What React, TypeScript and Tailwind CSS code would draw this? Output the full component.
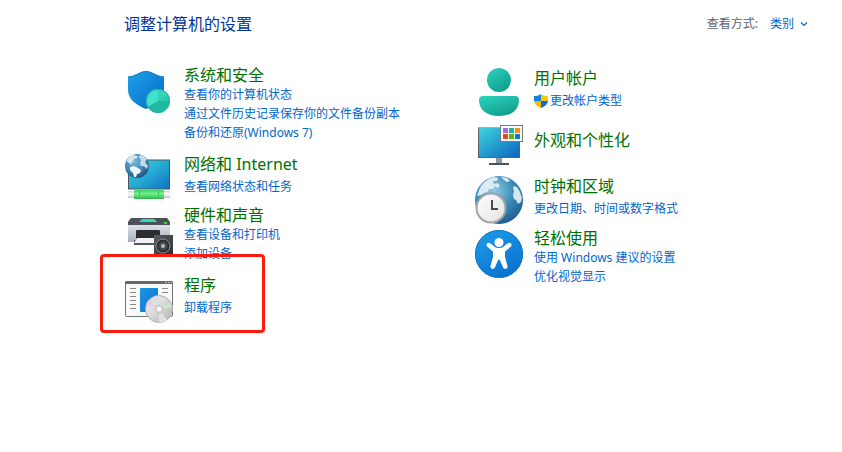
import React from 'react';
import clsx from 'clsx';

interface Task {
  label: string;
  shield?: boolean;
}

interface Category {
  title: string;
  icon: React.ReactNode;
  tasks: Task[];
  highlighted?: boolean;
}

const iconClass = 'block w-12 h-12 shrink-0 overflow-visible';

const SecurityIcon = () => (
  <svg className={iconClass} viewBox="0 0 48 48" aria-hidden="true">
    <defs>
      <linearGradient id="sec-shield" x1="0" y1="0" x2="1" y2="1">
        <stop offset="0" stopColor="#1fa2e8" />
        <stop offset="1" stopColor="#0568c6" />
      </linearGradient>
    </defs>
    <path d="M4 8.500C11 8.500 16 3 22 3s11 5.500 18 5.500V22c0 9-8 15-18 19C12 37 4 31 4 22Z" fill="url(#sec-shield)" />
    <path d="M4.500 9C11.500 9 16 3.500 22 3.500S32.500 9 39.500 9" fill="none" stroke="#1580c4" />
    <circle cx="34" cy="33" r="12" fill="#22b8a0" />
    <path d="M34 33V21a12 12 0 0 0-10.400 18Z" fill="#41e2cb" />
    <path d="M34 33V21a12 12 0 0 1 10.400 6Z" fill="#35d3bb" />
    <path d="M34 33l10.400-6a12 12 0 0 1 1.600 6Z" fill="#2ec9b1" />
    <circle cx="34" cy="33" r="11.500" fill="none" stroke="#27b39d" />
  </svg>
);

const NetworkIcon = () => (
  <svg className={iconClass} viewBox="0 0 48 48" aria-hidden="true">
    <defs>
      <linearGradient id="net-screen" x1="0" y1="0" x2="1" y2="1">
        <stop offset="0" stopColor="#45d6e6" />
        <stop offset="0.5" stopColor="#25aad4" />
        <stop offset="1" stopColor="#1270c4" />
      </linearGradient>
      <radialGradient id="net-globe" cx="0.4" cy="0.3" r="0.7">
        <stop offset="0" stopColor="#79b6d8" />
        <stop offset="0.6" stopColor="#4389b4" />
        <stop offset="1" stopColor="#22547f" />
      </radialGradient>
      <linearGradient id="net-cable" x1="0" y1="0" x2="0" y2="1">
        <stop offset="0" stopColor="#3fce5f" />
        <stop offset="0.4" stopColor="#75f08e" />
        <stop offset="1" stopColor="#2fb44e" />
      </linearGradient>
      <linearGradient id="net-plug" x1="0" y1="0" x2="0" y2="1">
        <stop offset="0" stopColor="#d4d4d4" />
        <stop offset="0.4" stopColor="#ffffff" />
        <stop offset="1" stopColor="#c4c4c4" />
      </linearGradient>
    </defs>
    <rect x="4.500" y="8" width="41" height="29" fill="url(#net-screen)" stroke="#4c5660" />
    <rect x="4" y="39" width="42" height="7" fill="url(#net-plug)" />
    <rect x="10" y="38" width="30" height="9" rx="1" fill="url(#net-cable)" />
    <path d="M15.500 38v9M34.500 38v9" stroke="#3dc45c" />
    <circle cx="13" cy="14" r="12" fill="url(#net-globe)" />
    <path d="M2.500 9C4 5.500 7 3 10 2.500l2 1.500 2 0-1 2-3 1-1 3-2 1 1 2-2-1-2-2Z" fill="#d3e5ef" />
    <path d="M6 15l4-1 4 2 3 2-1 3-3 1-1 3-2 0-1-4-3-3Z" fill="#edf4f7" />
    <path d="M15 4l3-1 3 2 2 3-2 1 1 3 2 1-1 4-3-3-3 0-1-3 1-3-2-2Z" fill="#c3dbe8" />
  </svg>
);

const HardwareIcon = () => (
  <svg className={iconClass} viewBox="0 0 48 48" aria-hidden="true">
    <defs>
      <linearGradient id="hw-glow" x1="0" y1="0" x2="1" y2="0">
        <stop offset="0" stopColor="#28c8f0" />
        <stop offset="1" stopColor="#3de884" />
      </linearGradient>
      <linearGradient id="hw-body" x1="0" y1="0" x2="0" y2="1">
        <stop offset="0" stopColor="#dce0e6" />
        <stop offset="1" stopColor="#a9b0ba" />
      </linearGradient>
      <linearGradient id="hw-speaker" x1="0" y1="0" x2="1" y2="1">
        <stop offset="0" stopColor="#5a5d61" />
        <stop offset="1" stopColor="#2b2d31" />
      </linearGradient>
    </defs>
    <path d="M7 10h36l3 4v3H4v-3Z" fill="#4b5159" />
    <path d="M18 11h12l3 3H15Z" fill="url(#hw-glow)" />
    <rect x="40" y="14" width="3" height="2" fill="#39d638" />
    <rect x="4" y="17" width="42" height="17" fill="url(#hw-body)" />
    <rect x="10" y="32" width="30" height="5" fill="#50565f" />
    <rect x="12" y="22" width="24" height="9" rx="1" fill="#2a2d33" />
    <path d="M13 30h22l1 5H10Z" fill="#f2f2f2" />
    <rect x="30" y="27" width="19" height="21" fill="url(#hw-speaker)" />
    <circle cx="39" cy="38" r="7" fill="#2b2d30" stroke="#8b8e92" />
    <circle cx="39" cy="38" r="4.500" fill="#45484c" />
    <circle cx="39" cy="38" r="2" fill="#b7babd" />
  </svg>
);

const ProgramsIcon = () => (
  <svg className={iconClass} viewBox="0 0 48 48" aria-hidden="true">
    <defs>
      <linearGradient id="prog-pane" x1="0" y1="0" x2="1" y2="1">
        <stop offset="0" stopColor="#1e97e4" />
        <stop offset="1" stopColor="#0a70cf" />
      </linearGradient>
      <linearGradient id="prog-disc" x1="0" y1="0" x2="1" y2="1">
        <stop offset="0" stopColor="#c4c4c4" />
        <stop offset="0.3" stopColor="#e6e6e6" />
        <stop offset="0.6" stopColor="#cfcfcf" />
        <stop offset="1" stopColor="#b4b4b4" />
      </linearGradient>
    </defs>
    <rect x="1.500" y="8.500" width="47" height="35" rx="1" fill="#f8f8f8" stroke="#737373" />
    <path d="M1 11V9l1-1h46l1 1v2Z" fill="#686868" />
    <path d="M41 9.500h1.500M44 9.500h1.500M47 9.500h1" stroke="#d8d8d8" />
    <path d="M6 15.500h6M6 19.500h6M6 23.500h6M6 27.500h6M6 31.500h6M6 35.500h6M38 15.500h6M38 19.500h6" stroke="#8a8a8a" />
    <rect x="16" y="15" width="18" height="24" rx="1" fill="url(#prog-pane)" />
    <circle cx="35" cy="36" r="13.500" fill="url(#prog-disc)" stroke="#b0b0b0" />
    <path d="M35 36 22 32a13.500 13.500 0 0 1 3-5.500Z" fill="#e6d0e5" />
    <path d="M35 36l12-6a13.500 13.500 0 0 1 1.500 4Z" fill="#c9eacc" />
    <path d="M35 36 28 24.500a13.500 13.500 0 0 1 7-2Z" fill="#dedede" />
    <path d="M35 36l8 11a13.500 13.500 0 0 1-8 2.500Z" fill="#e0e0e0" />
    <circle cx="35" cy="36" r="4" fill="#d9d9d9" stroke="#c4c4c4" />
    <circle cx="35" cy="36" r="2" fill="#ffffff" />
  </svg>
);

const UserIcon = () => (
  <svg className={iconClass} viewBox="-1 0 48 48" aria-hidden="true">
    <defs>
      <linearGradient id="user-fill" x1="0.2" y1="0" x2="0.8" y2="1">
        <stop offset="0" stopColor="#2ad0bb" />
        <stop offset="1" stopColor="#109a89" />
      </linearGradient>
    </defs>
    <circle cx="24" cy="14" r="12" fill="url(#user-fill)" />
    <path d="M8 30h32a4 4 0 0 1 4 4c0 10-8 16-20 16S4 44 4 34a4 4 0 0 1 4-4Z" fill="url(#user-fill)" />
  </svg>
);

const AppearanceIcon = () => (
  <svg className={iconClass} viewBox="-1 0 48 48" aria-hidden="true">
    <defs>
      <linearGradient id="app-screen" x1="0" y1="0" x2="1" y2="1">
        <stop offset="0" stopColor="#3dd6e2" />
        <stop offset="1" stopColor="#0c63bd" />
      </linearGradient>
    </defs>
    <rect x="21" y="38" width="6" height="5" fill="#8e979f" />
    <rect x="14" y="43" width="20" height="2" fill="#4a5159" />
    <rect x="3.500" y="7.500" width="41" height="30" fill="url(#app-screen)" stroke="#59636d" />
    <path d="M3 7.500h42" stroke="#9fb0bb" />
    <rect x="25.500" y="5.500" width="22" height="16" fill="#fbfbfb" stroke="#77797c" />
    <rect x="28" y="8" width="5" height="5" fill="#9a6fd8" />
    <rect x="34" y="8" width="5" height="5" fill="#19b5a2" />
    <rect x="40" y="8" width="5" height="5" fill="#f7900f" />
    <rect x="28" y="14" width="5" height="5" fill="#e0500f" />
    <rect x="34" y="14" width="5" height="5" fill="#5fb410" />
    <rect x="40" y="14" width="5" height="5" fill="#0a78d7" />
  </svg>
);

const ClockIcon = () => (
  <svg className={iconClass} viewBox="-1 0 48 48" aria-hidden="true">
    <defs>
      <radialGradient id="clk-globe" cx="0.4" cy="0.3" r="0.75">
        <stop offset="0" stopColor="#8fcbe4" />
        <stop offset="0.5" stopColor="#3f90bb" />
        <stop offset="1" stopColor="#1b5a8c" />
      </radialGradient>
      <linearGradient id="clk-face" x1="0" y1="0" x2="1" y2="1">
        <stop offset="0" stopColor="#ffffff" />
        <stop offset="1" stopColor="#e2e2e2" />
      </linearGradient>
    </defs>
    <circle cx="24" cy="26" r="24" fill="url(#clk-globe)" />
    <path d="M5 14C8 8 14 4 19 3l4 1-1 3-4 0 1 3 4-1 2 3-3 2-2-2-2 3-4 0-1 3-4 1-3 2-4 1Z" fill="#d9ebf3" />
    <path d="M26 3l6 1 3 3-3 1-3-2Z" fill="#d9ebf3" />
    <path d="M39 12l3 1 3 5 2 6-1 4-3 2-2-4-2-1-1-4 1-4-1-3Z" fill="#d2e6ef" />
    <circle cx="16" cy="34" r="14.500" fill="url(#clk-face)" stroke="#a3a3a3" strokeWidth="2" />
    <path d="M17 26v9h6" fill="none" stroke="#4b4b4b" strokeWidth="2" />
  </svg>
);

const AccessIcon = () => (
  <svg className={iconClass} viewBox="-1 0 48 48" aria-hidden="true">
    <defs>
      <linearGradient id="acc-fill" x1="0.2" y1="0" x2="0.8" y2="1">
        <stop offset="0" stopColor="#1c9be6" />
        <stop offset="1" stopColor="#0a6fce" />
      </linearGradient>
    </defs>
    <circle cx="24" cy="23" r="24" fill="url(#acc-fill)" />
    <circle cx="24" cy="23" r="23.500" fill="none" stroke="#1479c4" />
    <circle cx="24" cy="11.500" r="4.500" fill="#ffffff" />
    <path
      d="M12 12.500c1-1.200 2.500-1 3.500 0l4.500 3.500c2 1.300 6 1.300 8 0l4.500-3.500c1-1 2.500-1.200 3.500 0s.7 2.500-.3 3.300L30 20.500V26l2.500 9c.3 1.400-.3 2.500-1.500 2.800s-2.500-.3-3-1.600L24.800 29c-.3-.8-1.300-.8-1.600 0L20 36.200c-.5 1.300-1.800 1.900-3 1.600s-1.800-1.400-1.500-2.800L18 26v-5.500l-5.700-4.700c-1-.8-1.300-2.100-.3-3.300Z"
      fill="#ffffff"
    />
  </svg>
);

const ShieldBadge = () => (
  <svg className="block w-3.5 h-3.5 shrink-0" viewBox="0 0 14 14" aria-hidden="true">
    <path d="M7 0C5 1.500 3 2 0 2v5h7Z" fill="#1683d8" />
    <path d="M7 0c2 1.500 4 2 7 2v5H7Z" fill="#fdc60b" />
    <path d="M0 7h7v7C3 12.500 .5 10.500 0 7Z" fill="#f9b90a" />
    <path d="M14 7H7v7c4-1.500 6.500-3.500 7-7Z" fill="#0f6fc6" />
  </svg>
);

const leftColumn: Category[] = [
  {
    title: '系统和安全',
    icon: <SecurityIcon />,
    tasks: [
      { label: '查看你的计算机状态' },
      { label: '通过文件历史记录保存你的文件备份副本' },
      { label: '备份和还原(Windows 7)' },
    ],
  },
  { title: '网络和 Internet', icon: <NetworkIcon />, tasks: [{ label: '查看网络状态和任务' }] },
  {
    title: '硬件和声音',
    icon: <HardwareIcon />,
    tasks: [{ label: '查看设备和打印机' }, { label: '添加设备' }],
  },
  { title: '程序', icon: <ProgramsIcon />, tasks: [{ label: '卸载程序' }], highlighted: true },
];

const rightColumn: Category[] = [
  { title: '用户帐户', icon: <UserIcon />, tasks: [{ label: '更改帐户类型', shield: true }] },
  { title: '外观和个性化', icon: <AppearanceIcon />, tasks: [] },
  { title: '时钟和区域', icon: <ClockIcon />, tasks: [{ label: '更改日期、时间或数字格式' }] },
  {
    title: '轻松使用',
    icon: <AccessIcon />,
    tasks: [{ label: '使用 Windows 建议的设置' }, { label: '优化视觉显示' }],
  },
];

const CategoryItem: React.FC<{ category: Category }> = ({ category }) => {
  const { title, icon, tasks, highlighted } = category;
  const isList = tasks.length > 1;

  return (
    <section className={clsx('relative flex items-start gap-3', isList && 'pb-[5px]')}>
      <div className={clsx(isList && 'pt-[3px]')}>{icon}</div>
      <div className={clsx(tasks.length === 0 && 'pt-2.5', tasks.length === 1 && 'pt-0.5')}>
        <h2 className="text-[16px] leading-5 whitespace-nowrap">
          <a href="#" className="text-[#007000] hover:underline">{title}</a>
        </h2>
        {tasks.length > 0 && (
          <ul className={clsx(!isList && 'pt-[3px]')}>
            {tasks.map((task) => (
              <li key={task.label} className="text-[12px] leading-[19px] whitespace-nowrap">
                <a href="#" className="inline-flex items-center gap-0.5 align-top text-[#0066cc] hover:underline">
                  {task.shield && <ShieldBadge />}
                  {task.label}
                </a>
              </li>
            ))}
          </ul>
        )}
      </div>
      {highlighted && (
        <div className="absolute -left-6 -top-[19px] w-[165px] h-[79px] border-3 border-[#fb1a0e] rounded-sm pointer-events-none" />
      )}
    </section>
  );
};

const App: React.FC = () => {
  return (
    <main className="min-h-screen bg-white pl-[124px] pr-[18px] pt-3.5 font-['Noto_Sans','Noto_Sans_CJK_SC',sans-serif]">
      <header className="flex items-center justify-between pr-4">
        <h1 className="text-[16px] leading-5 text-[#003399]">调整计算机的设置</h1>
        <div className="flex items-center gap-3 text-[12px] leading-5">
          <label htmlFor="view-by" className="text-[#5a6472]">查看方式:</label>
          <div className="flex items-center gap-1.5">
            <select id="view-by" className="w-6 appearance-none bg-transparent text-[#0066cc] outline-none cursor-pointer">
              <option>类别</option>
              <option>大图标</option>
              <option>小图标</option>
            </select>
            <svg className="w-2 h-2" viewBox="0 0 8 8" aria-hidden="true">
              <path d="M1 2.500l3 3 3-3" fill="none" stroke="#0066cc" strokeWidth="1.200" />
            </svg>
          </div>
        </div>
      </header>

      <div className="grid grid-cols-2 pt-[31px]">
        <div className="flex flex-col gap-[5px]">
          {leftColumn.map((category) => (
            <CategoryItem key={category.title} category={category} />
          ))}
        </div>
        <div className="flex flex-col gap-1.5 pt-px">
          {rightColumn.map((category) => (
            <CategoryItem key={category.title} category={category} />
          ))}
        </div>
      </div>
    </main>
  );
};

export default App;
